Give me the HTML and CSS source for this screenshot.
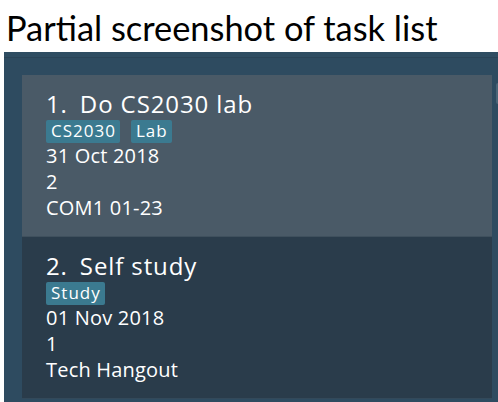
FILE: index.html
```html
<!DOCTYPE html>
<html>
<head>
<meta charset="utf-8">
<link rel="stylesheet" href="styles.css">
</head>
<body>
<h1 class="caption">Partial screenshot of task list</h1>
<div class="panel">
  <div class="scroll-thumb"></div>
  <ul class="task-list">
    <li class="task-card selected">
      <div class="task-title"><span class="task-index">1.</span>Do CS2030 lab</div>
      <div class="tags"><span class="tag">CS2030</span><span class="tag">Lab</span></div>
      <div class="task-line">31 Oct 2018</div>
      <div class="task-line">2</div>
      <div class="task-line">COM1 01-23</div>
    </li>
    <li class="task-card">
      <div class="task-title"><span class="task-index">2.</span>Self study</div>
      <div class="tags"><span class="tag">Study</span></div>
      <div class="task-line">01 Nov 2018</div>
      <div class="task-line">1</div>
      <div class="task-line">Tech Hangout</div>
    </li>
  </ul>
</div>
</body>
</html>
```

FILE: styles.css
```css
html, body {
  margin: 0;
  padding: 0;
  background: #ffffff;
  overflow: hidden;
}

.caption {
  margin: 0;
  height: 52px;
  padding-left: 6px;
  font-family: Lato, "Open Sans", sans-serif;
  font-weight: 400;
  font-size: 34.4px;
  line-height: 56px;
  color: #000000;
  box-sizing: border-box;
}

.panel {
  position: relative;
  margin-left: 4px;
  height: 360px;
  background: #2e4b60;
  border-top: 5px solid #2f4d62;
  box-shadow: inset 0 1px 0 #2a4457;
  padding: 18px 6px 0 18px;
  box-sizing: border-box;
}

.scroll-thumb {
  position: absolute;
  right: 0;
  top: 26px;
  width: 2px;
  height: 21px;
  background: #4b6577;
  border-radius: 2px 0 0 2px;
}

.task-list {
  list-style: none;
  margin: 0;
  padding: 0;
}

.task-card {
  height: 162px;
  box-sizing: border-box;
  padding: 14px 24px 0 24px;
  background: #2a3c4b;
  color: #ffffff;
  font-family: "Open Sans", sans-serif;
  border-bottom: 1px solid #33495a;
}

.task-card.selected {
  background: #4a5a67;
  border-bottom-color: #3f505d;
}

.task-title {
  font-size: 24px;
  line-height: 30px;
  letter-spacing: 0.9px;
  white-space: nowrap;
}

.task-index {
  margin-right: 12px;
}

.tags {
  display: flex;
  gap: 11px;
  margin-top: 1px;
  height: 23px;
}

.tag {
  background: #3b7a90;
  border-radius: 2px;
  font-size: 17px;
  line-height: 21px;
  height: 23px;
  box-sizing: border-box;
  letter-spacing: 1px;
  padding: 0 4px 0 5px;
}

.task-line {
  font-size: 20px;
  line-height: 26px;
  letter-spacing: 0.2px;
}
```
